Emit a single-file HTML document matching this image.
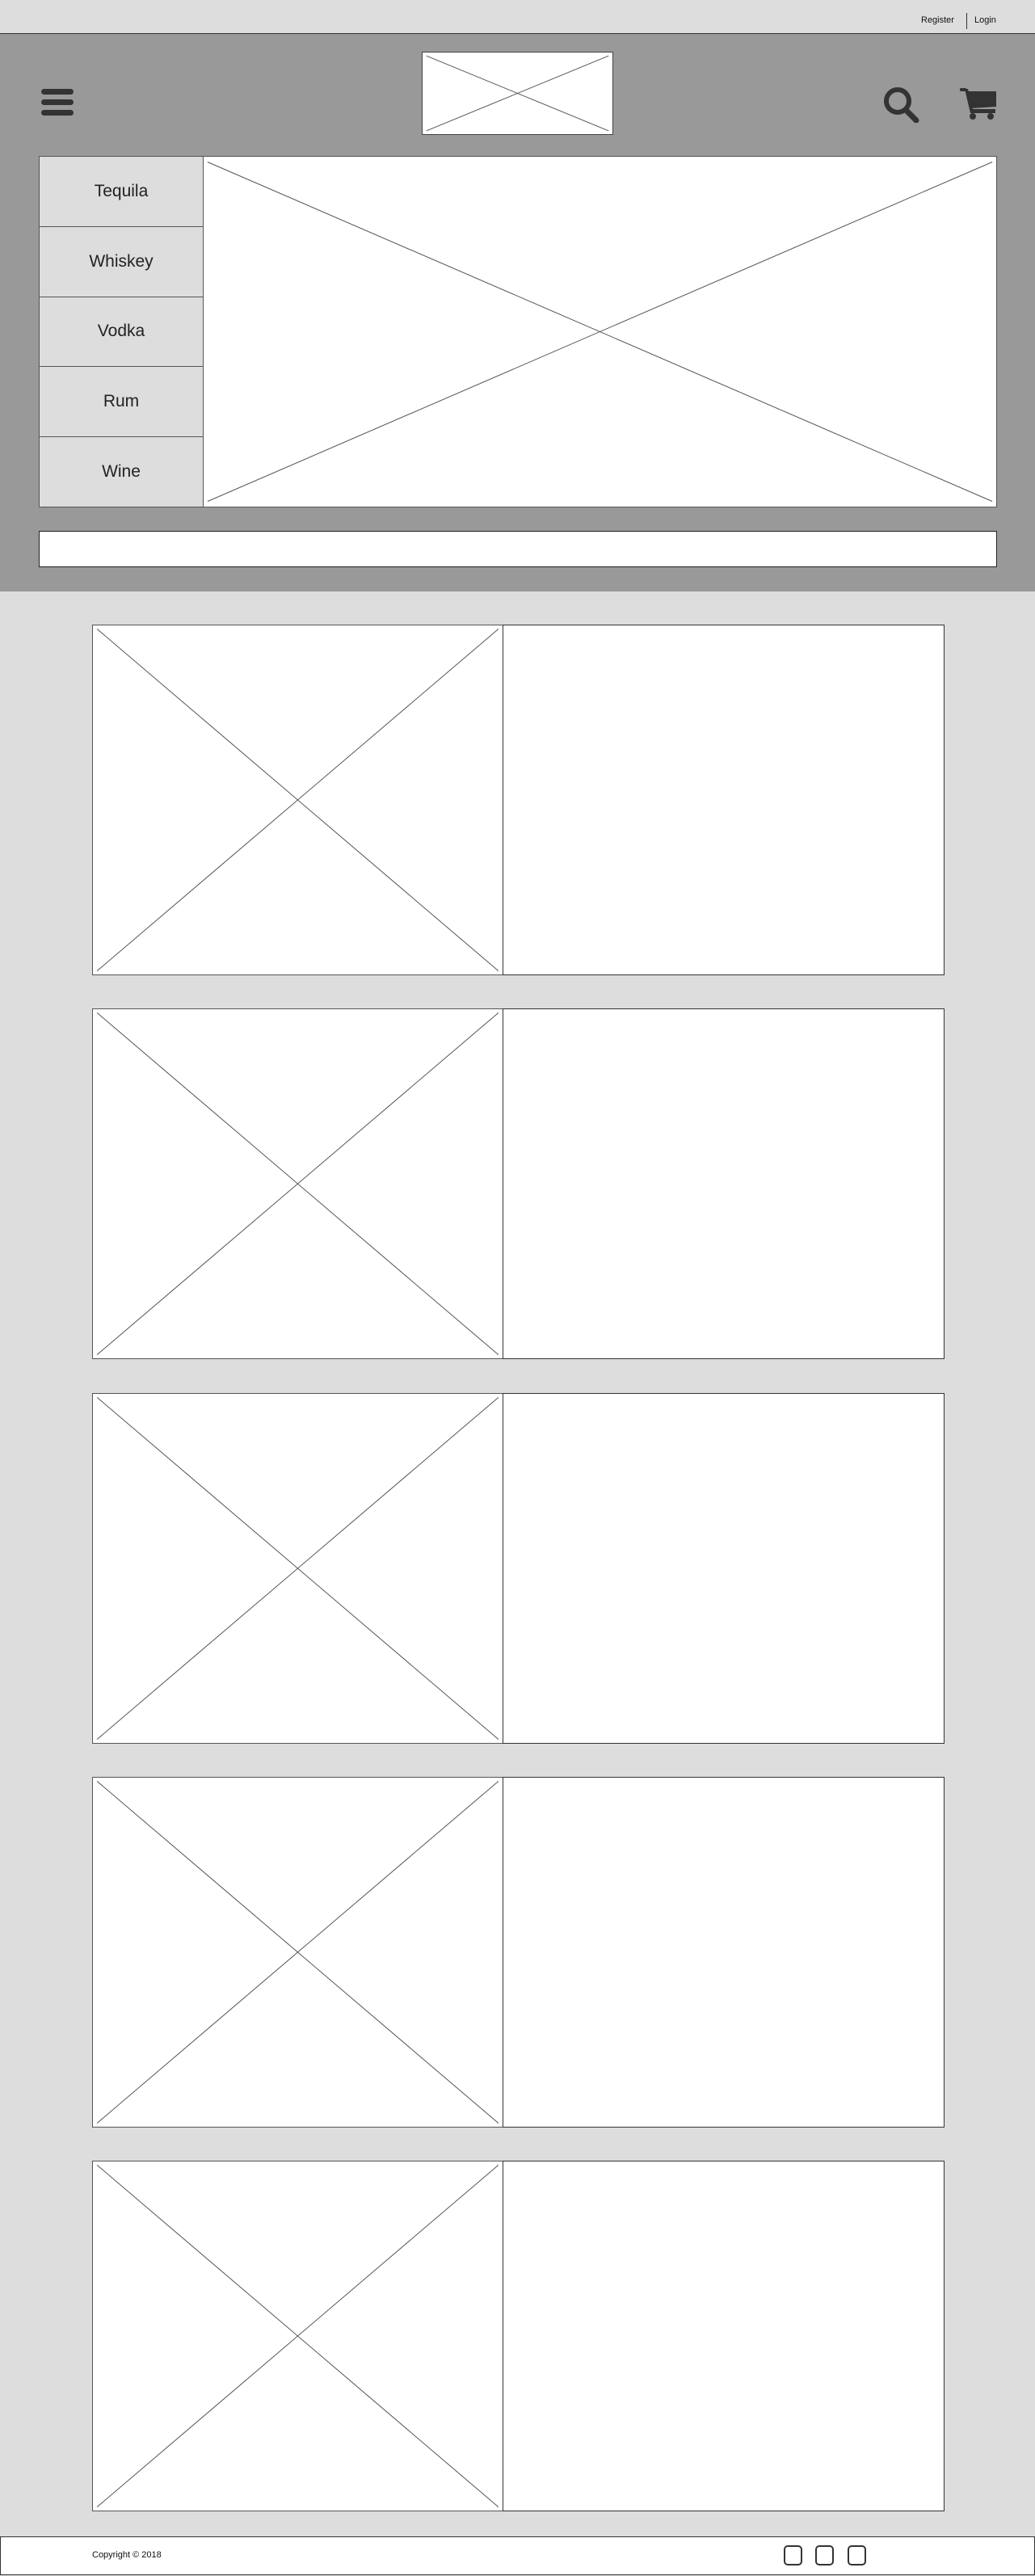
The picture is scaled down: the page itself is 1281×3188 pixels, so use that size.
<!DOCTYPE html>
<html><head><meta charset="utf-8"><style>
*{margin:0;padding:0;box-sizing:border-box}
body{width:1281px;height:3188px;background:#dddddd;position:relative;font-family:"Liberation Sans",sans-serif;overflow:hidden}
.abs{position:absolute}
.top{left:0;top:0;width:1281px;height:42px;background:#dddddd;border-bottom:1px solid #333}
.hdr{left:0;top:42px;width:1281px;height:690px;background:#999999}
.box{background:#fff;border:1px solid #444}
svg.x{position:absolute;left:0;top:0;width:100%;height:100%}
.menu{display:flex;flex-direction:column}
.menu div{flex:1;border-bottom:1px solid #555;display:flex;align-items:center;justify-content:center;font-size:21px;color:#222;background:#dddddd}
.menu div:last-child{border-bottom:none}
</style></head><body>
<div class="abs top"></div>
<div class="abs" style="left:1140px;top:19px;font-size:11px;color:#111">Register</div>
<div class="abs" style="left:1196px;top:16px;width:1px;height:20px;background:#333"></div>
<div class="abs" style="left:1206px;top:19px;font-size:11px;color:#111">Login</div>
<div class="abs hdr"></div>
<div class="abs box" style="left:522px;top:64px;width:237px;height:103px"><svg class="x" viewBox="0 0 100 100" preserveAspectRatio="none"><path d="M2 4L98 96M98 4L2 96" stroke="#555" stroke-width="1" vector-effect="non-scaling-stroke" fill="none"/></svg></div>
<svg class="abs" style="left:51px;top:108px" width="40" height="38"><g fill="#333"><rect x="0" y="2" width="40" height="7" rx="3.5"/><rect x="0" y="15" width="40" height="7" rx="3.5"/><rect x="0" y="28" width="40" height="7" rx="3.5"/></g></svg>
<svg class="abs" style="left:1090px;top:104px" width="50" height="48"><circle cx="21" cy="21" r="14" stroke="#333" stroke-width="6" fill="none"/><path d="M31 32L44 45" stroke="#333" stroke-width="7" stroke-linecap="round"/></svg>
<svg class="abs" style="left:1188px;top:106px" width="48" height="44"><g fill="#333"><rect x="0" y="3" width="8" height="4" rx="1.5"/><path d="M6 4L13 34H44V29H16L10 4Z"/><path d="M10 7H45V26L14 28Z"/><circle cx="16" cy="38" r="4"/><circle cx="38" cy="38" r="4"/></g></svg>
<div class="abs menu" style="left:48px;top:193px;width:204px;height:435px;border:1px solid #555">
<div>Tequila</div><div>Whiskey</div><div>Vodka</div><div>Rum</div><div>Wine</div></div>
<div class="abs box" style="left:251px;top:193px;width:983px;height:435px;border-color:#555"><svg class="x" viewBox="0 0 100 100" preserveAspectRatio="none"><path d="M0.5 1.5L99.5 98.5M99.5 1.5L0.5 98.5" stroke="#555" stroke-width="1" vector-effect="non-scaling-stroke" fill="none"/></svg></div>
<div class="abs box" style="left:48px;top:657px;width:1186px;height:45px;border-color:#222"></div>

<div class="abs box" style="left:114px;top:773px;width:509px;height:434px;border-color:#555"><svg class="x" viewBox="0 0 100 100" preserveAspectRatio="none"><path d="M1 1L99 99M99 1L1 99" stroke="#555" stroke-width="1" vector-effect="non-scaling-stroke" fill="none"/></svg></div>
<div class="abs box" style="left:622px;top:773px;width:547px;height:434px;border-color:#333"></div>
<div class="abs box" style="left:114px;top:1248px;width:509px;height:434px;border-color:#555"><svg class="x" viewBox="0 0 100 100" preserveAspectRatio="none"><path d="M1 1L99 99M99 1L1 99" stroke="#555" stroke-width="1" vector-effect="non-scaling-stroke" fill="none"/></svg></div>
<div class="abs box" style="left:622px;top:1248px;width:547px;height:434px;border-color:#333"></div>
<div class="abs box" style="left:114px;top:1724px;width:509px;height:434px;border-color:#555"><svg class="x" viewBox="0 0 100 100" preserveAspectRatio="none"><path d="M1 1L99 99M99 1L1 99" stroke="#555" stroke-width="1" vector-effect="non-scaling-stroke" fill="none"/></svg></div>
<div class="abs box" style="left:622px;top:1724px;width:547px;height:434px;border-color:#333"></div>
<div class="abs box" style="left:114px;top:2199px;width:509px;height:434px;border-color:#555"><svg class="x" viewBox="0 0 100 100" preserveAspectRatio="none"><path d="M1 1L99 99M99 1L1 99" stroke="#555" stroke-width="1" vector-effect="non-scaling-stroke" fill="none"/></svg></div>
<div class="abs box" style="left:622px;top:2199px;width:547px;height:434px;border-color:#333"></div>
<div class="abs box" style="left:114px;top:2674px;width:509px;height:434px;border-color:#555"><svg class="x" viewBox="0 0 100 100" preserveAspectRatio="none"><path d="M1 1L99 99M99 1L1 99" stroke="#555" stroke-width="1" vector-effect="non-scaling-stroke" fill="none"/></svg></div>
<div class="abs box" style="left:622px;top:2674px;width:547px;height:434px;border-color:#333"></div>

<div class="abs" style="left:0;top:3139px;width:1281px;height:48px;background:#fff;border:1px solid #333"></div>
<div class="abs" style="left:114px;top:3156px;font-size:11px;color:#111">Copyright © 2018</div>
<div class="abs" style="left:970px;top:3150px;width:23px;height:25px;border:2px solid #333;border-radius:5px"></div>
<div class="abs" style="left:1009px;top:3150px;width:23px;height:25px;border:2px solid #333;border-radius:5px"></div>
<div class="abs" style="left:1049px;top:3150px;width:23px;height:25px;border:2px solid #333;border-radius:5px"></div>
</body></html>
